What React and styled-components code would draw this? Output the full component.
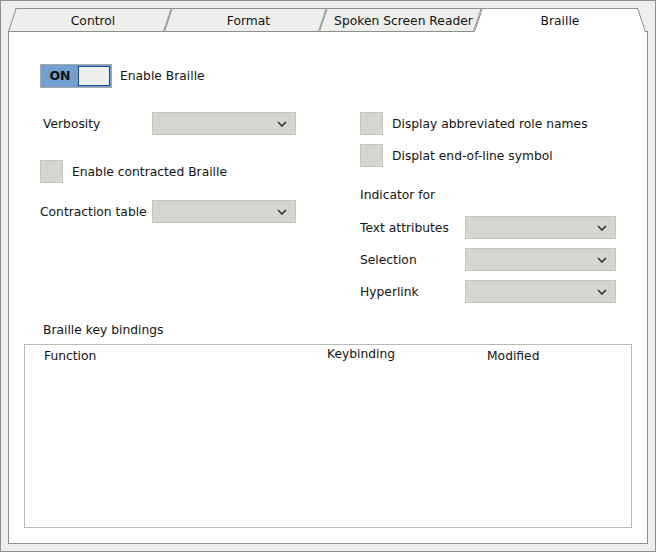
import React from "react";
import styled, { createGlobalStyle, css } from "styled-components";

const GlobalStyle = createGlobalStyle`
  html, body {
    margin: 0;
    padding: 0;
    background: #eeeeec;
  }
  body {
    font-family: "DejaVu Sans", "Liberation Sans", sans-serif;
    font-size: 12.3px;
    color: #141414;
  }
`;

const Frame = styled.div`
  width: 656px;
  height: 552px;
  box-sizing: border-box;
  border: 1px solid #8d8f8a;
  background: #eeeeec;
  padding: 7px 7px 7px 7px;
  display: flex;
  flex-direction: column;
`;

const TabRow = styled.div`
  height: 23px;
  display: flex;
  align-items: flex-start;
  padding-left: 4px;
`;

const slant = "18.43deg";

const Tab = styled.div`
  position: relative;
  width: ${(p) => p.width}px;
  height: 23px;
  display: flex;
  align-items: center;
  justify-content: center;
  padding: 3px 0 0 6px;
  box-sizing: border-box;
  line-height: 1;
  span {
    position: relative;
    z-index: 1;
  }
  &::before {
    content: "";
    position: absolute;
    inset: 0;
    background: #eeeeec;
    border: 1px solid #8d8f8a;
    border-bottom: none;
    transform: skewX(-${slant});
  }
  ${(p) =>
    p.active &&
    css`
      height: 24px;
      z-index: 2;
      padding: 3px 0 1px 0;
      &::before {
        right: 40%;
        background: #fff;
        border-right: none;
      }
      &::after {
        content: "";
        position: absolute;
        top: 0;
        bottom: 0;
        left: 40%;
        right: 0;
        background: #fff;
        border: 1px solid #8d8f8a;
        border-bottom: none;
        border-left: none;
        transform: skewX(${slant});
      }
    `}
`;

const Panel = styled.div`
  flex: 1;
  background: #fff;
  border: 1px solid #8d8f8a;
  padding: 32px 15px 15px 15px;
  display: flex;
  flex-direction: column;
`;

const ToggleRow = styled.div`
  display: flex;
  align-items: center;
  margin-left: 16px;
  gap: 8px;
  height: 23px;
`;

const Toggle = styled.div`
  width: 72px;
  height: 24px;
  box-sizing: border-box;
  border: 1px solid #a7aaa4;
  background: #729fcf;
  display: flex;
  align-items: stretch;
  padding: 1px;
`;

const ToggleText = styled.span`
  width: 36px;
  font-weight: bold;
  font-size: 12.5px;
  display: flex;
  align-items: center;
  justify-content: center;
  color: #111;
`;

const ToggleKnob = styled.div`
  flex: 1;
  background: #eeeeec;
  border: 1px solid #204a87;
`;

const FormGrid = styled.div`
  display: grid;
  grid-template-columns: 256px 256px;
  column-gap: 64px;
  margin: 25px 0 0 16px;
  align-items: start;
`;

const Column = styled.div`
  display: flex;
  flex-direction: column;
`;

const Row = styled.div`
  display: flex;
  align-items: center;
  height: 23px;
  margin-top: ${(p) => p.gap || 0}px;
`;

const Label = styled.span`
  width: ${(p) => p.width}px;
  padding-left: ${(p) => p.indent || 0}px;
  box-sizing: border-box;
  white-space: nowrap;
`;

const Combo = styled.div`
  width: ${(p) => p.width}px;
  height: 23px;
  box-sizing: border-box;
  background: #d3d7cf;
  border: 1px solid #c3c6bf;
  display: flex;
  align-items: center;
  justify-content: flex-end;
  padding-right: 8px;
`;

const Check = styled.div`
  width: 23px;
  height: 23px;
  box-sizing: border-box;
  background: #d3d7cf;
  border: 1px solid #c3c6bf;
  margin-right: 9px;
  flex-shrink: 0;
`;

const SectionLabel = styled.div`
  margin: 19px 0 0 19px;
  height: 16px;
  line-height: 16px;
`;

const Table = styled.div`
  flex: 1;
  margin-top: 6px;
  border: 1px solid #babdb6;
  display: flex;
  flex-direction: column;
`;

const HeaderRow = styled.div`
  display: grid;
  grid-template-columns: 283px 160px 1fr;
  padding-left: 19px;
  height: 22px;
  align-items: center;
`;

const HeaderCell = styled.span`
  position: relative;
  top: ${(p) => p.shift || 0}px;
`;

const Chevron = () => (
  <svg width="10" height="6" viewBox="0 0 10 6">
    <polyline
      points="1,1 5,5 9,1"
      fill="none"
      stroke="#2e3436"
      strokeWidth="1.6"
    />
  </svg>
);

const Select = ({ width }) => (
  <Combo width={width}>
    <Chevron />
  </Combo>
);

const tabs = [
  { name: "Control", width: 156 },
  { name: "Format", width: 155 },
  { name: "Spoken Screen Reader", width: 155 },
  { name: "Braille", width: 164, active: true },
];

const App = () => {
  return (
    <>
      <GlobalStyle />
      <Frame>
        <TabRow>
          {tabs.map((t) => (
            <Tab key={t.name} width={t.width} active={t.active}>
              <span>{t.name}</span>
            </Tab>
          ))}
        </TabRow>
        <Panel>
          <ToggleRow>
            <Toggle>
              <ToggleText>ON</ToggleText>
              <ToggleKnob />
            </Toggle>
            <span>Enable Braille</span>
          </ToggleRow>

          <FormGrid>
            <Column>
              <Row>
                <Label width={112} indent={3}>
                  Verbosity
                </Label>
                <Select width={144} />
              </Row>
              <Row gap={25}>
                <Check />
                <span>Enable contracted Braille</span>
              </Row>
              <Row gap={17}>
                <Label width={112}>Contraction table</Label>
                <Select width={144} />
              </Row>
            </Column>
            <Column>
              <Row>
                <Check />
                <span>Display abbreviated role names</span>
              </Row>
              <Row gap={9}>
                <Check />
                <span>Displat end-of-line symbol</span>
              </Row>
              <Row gap={16}>
                <Label width={105} indent={-1}>
                  Indicator for
                </Label>
              </Row>
              <Row gap={10}>
                <Label width={105}>Text attributes</Label>
                <Select width={151} />
              </Row>
              <Row gap={9}>
                <Label width={105}>Selection</Label>
                <Select width={151} />
              </Row>
              <Row gap={9}>
                <Label width={105}>Hyperlink</Label>
                <Select width={151} />
              </Row>
            </Column>
          </FormGrid>

          <SectionLabel>Braille key bindings</SectionLabel>
          <Table>
            <HeaderRow>
              <HeaderCell>Function</HeaderCell>
              <HeaderCell shift={-2}>Keybinding</HeaderCell>
              <HeaderCell>Modified</HeaderCell>
            </HeaderRow>
          </Table>
        </Panel>
      </Frame>
    </>
  );
};

export default App;
